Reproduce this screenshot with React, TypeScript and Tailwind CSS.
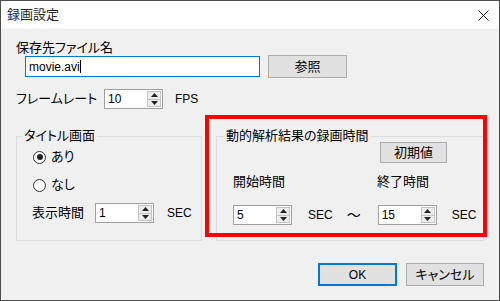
import React from "react";

function Spin({ value }: { value: string }) {
  return (
    <div className="flex h-[20px] w-[59px] items-stretch border border-[#a0a0a0] bg-white">
      <span className="flex-1 pl-[3px] text-[12px] leading-[18px] text-black">{value}</span>
      <div className="my-[1px] mr-[1px] flex w-[14px] flex-col border border-[#c4c4c4] bg-[#ececec]">
        <div className="flex flex-1 items-center justify-center border-b border-[#c4c4c4]">
          <svg width="7" height="4" viewBox="0 0 7 4">
            <path d="M0 4 L3.5 0 L7 4 Z" fill="#222" />
          </svg>
        </div>
        <div className="flex flex-1 items-center justify-center">
          <svg width="7" height="4" viewBox="0 0 7 4">
            <path d="M0 0 L3.5 4 L7 0 Z" fill="#222" />
          </svg>
        </div>
      </div>
    </div>
  );
}

function Radio({ checked, label }: { checked?: boolean; label: string }) {
  return (
    <label className="flex items-center gap-[5px] leading-[16px]">
      <span className="flex h-[13px] w-[13px] items-center justify-center rounded-full border border-[#333] bg-white">
        {checked && <span className="h-[6px] w-[6px] rounded-full bg-[#222]" />}
      </span>
      {label}
    </label>
  );
}

export default function App() {
  return (
    <div
      className="relative flex h-[301px] w-[500px] flex-col border border-[#4d4d4d] bg-[#f0f0f0] text-[13px] text-black [font-feature-settings:'palt']"
      style={{ fontFamily: '"Liberation Sans", "Noto Sans CJK JP", sans-serif' }}
    >
      {/* Title bar */}
      <div className="flex h-[28px] items-center justify-between bg-white pl-[6px] pr-[10px]">
        <span className="text-[13px] leading-[16px] text-[#222]">録画設定</span>
        <svg width="11" height="11" viewBox="0 0 11 11">
          <path d="M0.5 0.5 L10.5 10.5 M10.5 0.5 L0.5 10.5" stroke="#222" strokeWidth="1" />
        </svg>
      </div>

      {/* Body */}
      <div className="flex flex-col px-[15px]">
        <div className="mt-[11px] leading-[15px]">保存先ファイル名</div>

        <div className="flex items-center">
          <div className="ml-[9px] flex h-[21px] w-[235px] items-center border border-[#0078d7] bg-white pl-[3px]">
            <span className="text-[12px] leading-[16px]">movie.avi</span>
            <span className="h-[13px] w-px bg-black" />
          </div>
          <button className="ml-[8px] h-[23px] w-[79px] border border-[#adadad] bg-[#e1e1e1] leading-[16px]">
            参照
          </button>
        </div>

        <div className="mt-[11px] flex items-center">
          <span className="w-[88px] leading-[16px]">フレームレート</span>
          <Spin value="10" />
          <span className="ml-[12px] text-[12px]">FPS</span>
        </div>

        <div className="mt-[20px] flex gap-[14px]">
          {/* Title screen group */}
          <fieldset className="h-[112px] w-[186px] border border-[#dcdcdc]">
            <legend className="ml-[5px] px-[2px] leading-[14px]">タイトル画面</legend>
            <div className="flex flex-col pl-[16px]">
              <div className="mt-[6px]">
                <Radio checked label="あり" />
              </div>
              <div className="mt-[12px]">
                <Radio label="なし" />
              </div>
              <div className="mt-[10px] -ml-[1px] flex items-center">
                <span className="w-[63px] leading-[16px]">表示時間</span>
                <Spin value="1" />
                <span className="ml-[13px] text-[12px]">SEC</span>
              </div>
            </div>
          </fieldset>

          {/* Motion analysis recording time group */}
          <fieldset className="h-[112px] w-[268px] border border-[#dcdcdc]">
            <legend className="ml-[7px] px-[2px] leading-[14px]">動的解析結果の録画時間</legend>
            <div className="flex flex-col pl-[16px]">
              <button className="ml-[147px] -mt-[1px] h-[21px] w-[67px] border border-[#adadad] bg-[#e1e1e1] leading-[16px]">
                初期値
              </button>
              <div className="mt-[11px] flex leading-[16px]">
                <span className="w-[144px]">開始時間</span>
                <span>終了時間</span>
              </div>
              <div className="mt-[15px] flex items-center">
                <Spin value="5" />
                <span className="ml-[16px] text-[12px]">SEC</span>
                <span className="ml-[14px] w-[31px] text-[14px] leading-[16px]">～</span>
                <Spin value="15" />
                <span className="ml-[15px] text-[12px]">SEC</span>
              </div>
            </div>
          </fieldset>
        </div>

        <div className="mt-[22px] flex justify-end gap-[9px]">
          <button className="h-[23px] w-[79px] border-2 border-[#0078d7] bg-[#e1e1e1] text-[12px] leading-[16px]">
            OK
          </button>
          <button className="h-[23px] w-[78px] border border-[#adadad] bg-[#e1e1e1] leading-[16px]">
            キャンセル
          </button>
        </div>
      </div>

      {/* Red annotation frame */}
      <div className="absolute left-[204px] top-[114px] h-[122px] w-[282px] border-4 border-[#ff0000]" />
    </div>
  );
}
